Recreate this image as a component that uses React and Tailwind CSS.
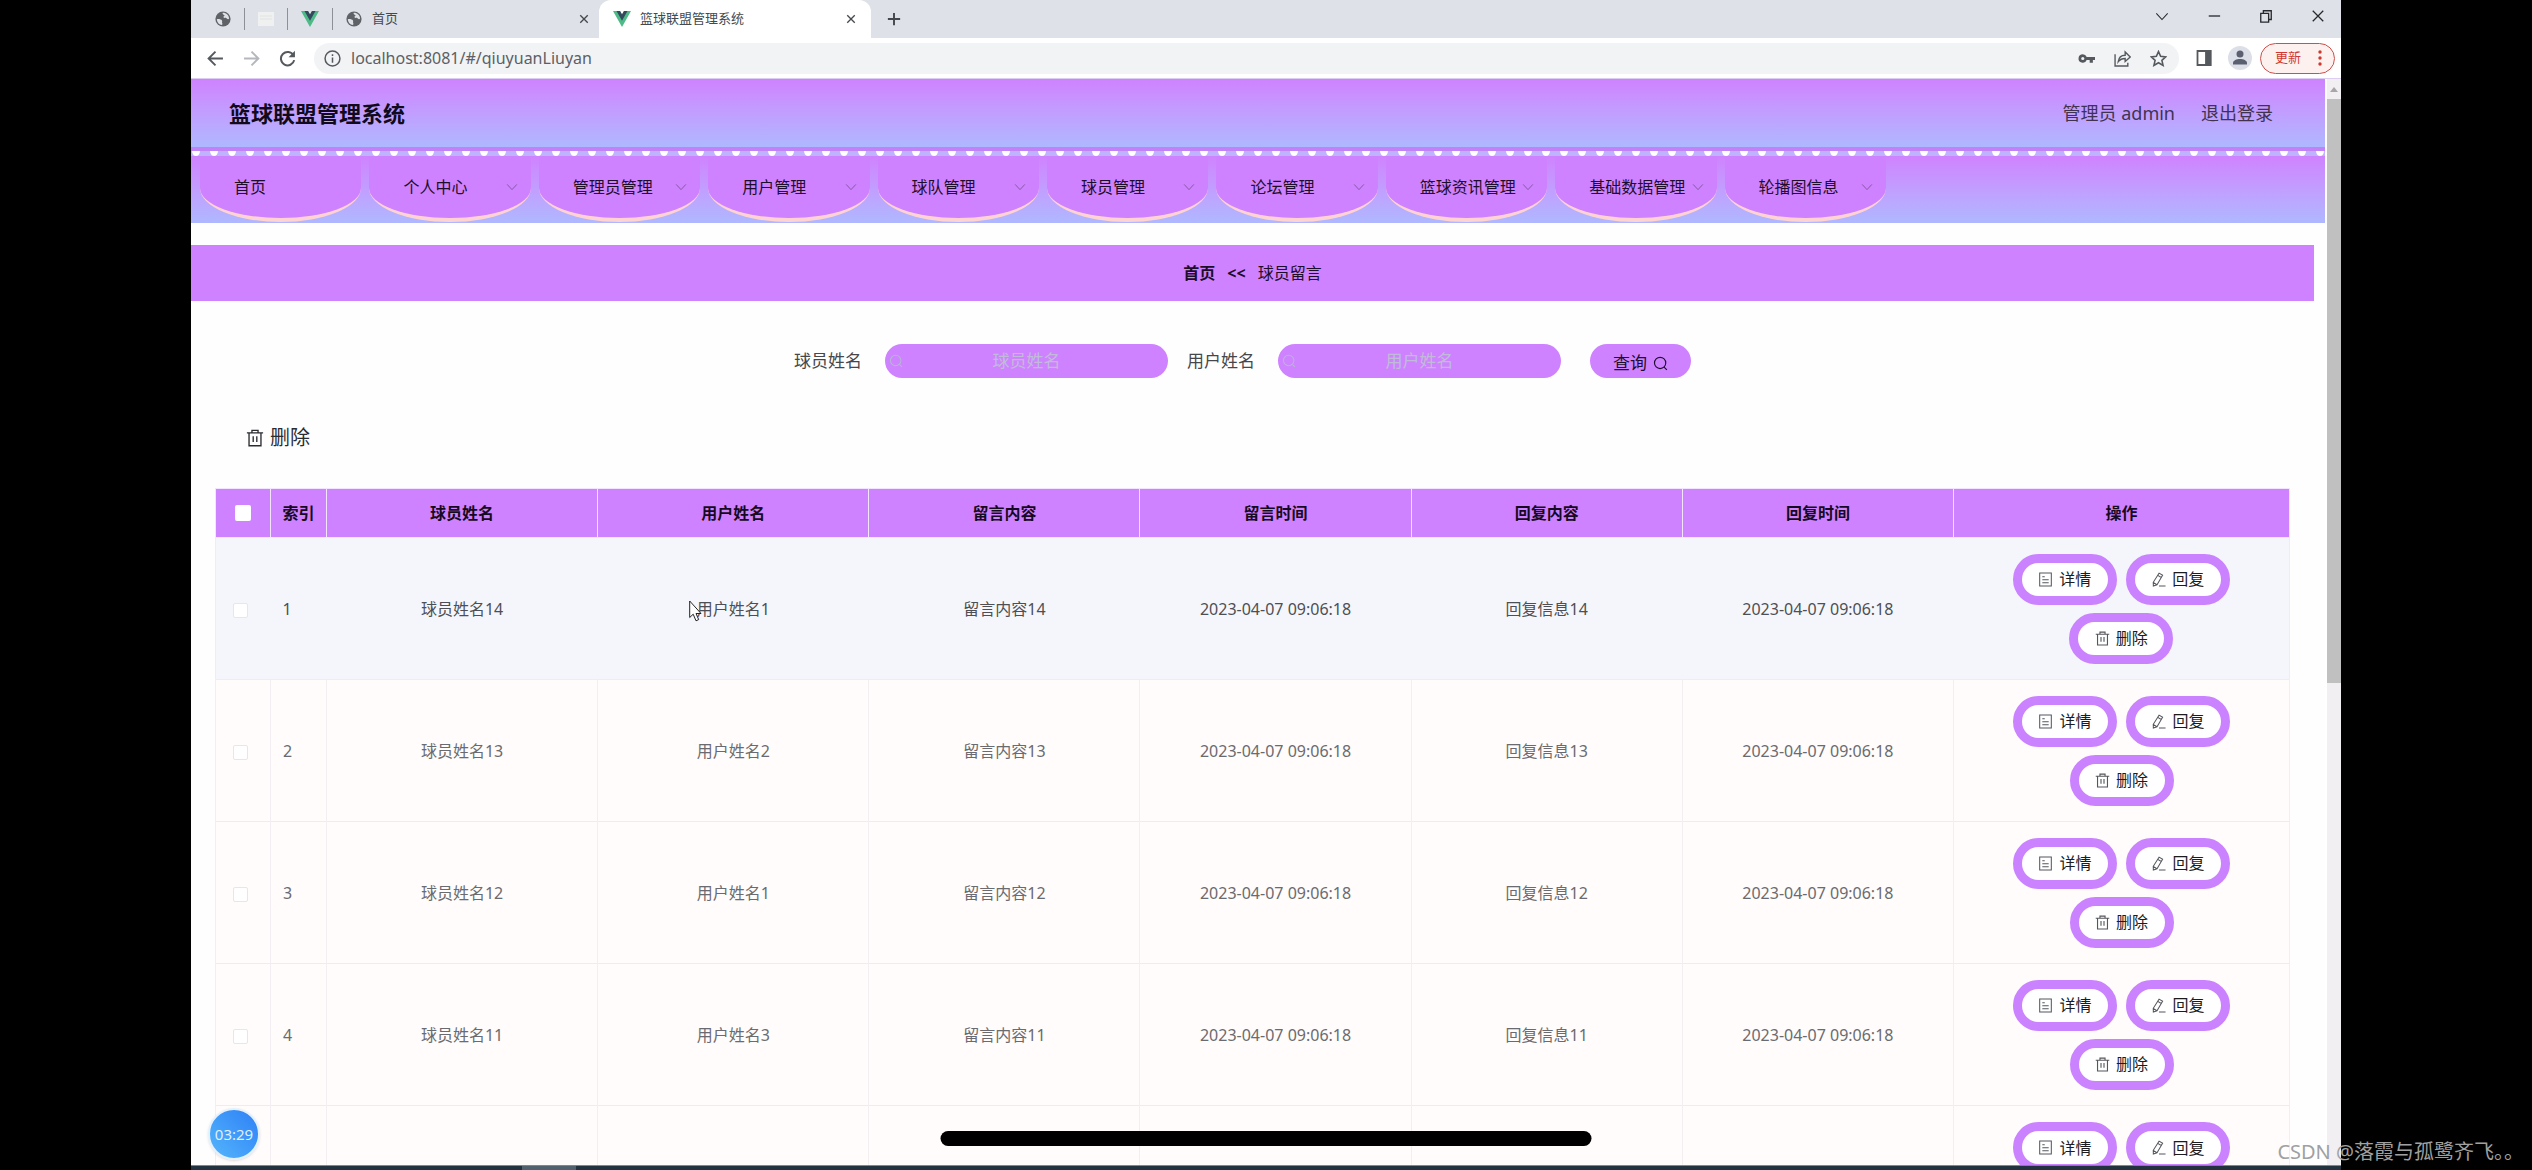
import React, { useState } from "react";

const menus = [
  { label: "首页", children: false },
  { label: "个人中心", children: true },
  { label: "管理员管理", children: true },
  { label: "用户管理", children: true },
  { label: "球队管理", children: true },
  { label: "球员管理", children: true },
  { label: "论坛管理", children: true },
  { label: "篮球资讯管理", children: true },
  { label: "基础数据管理", children: true },
  { label: "轮播图信息", children: true },
];

const columns = ["球员姓名", "用户姓名", "留言内容", "留言时间", "回复内容", "回复时间"];

const rows = [
  { id: 14, user: "用户姓名1" },
  { id: 13, user: "用户姓名2" },
  { id: 12, user: "用户姓名1" },
  { id: 11, user: "用户姓名3" },
];

const Icon = ({ children, className, width = 1.2 }) => (
  <svg
    viewBox="0 0 16 16"
    fill="none"
    stroke="currentColor"
    strokeWidth={width}
    className={className}
    aria-hidden="true"
  >
    {children}
  </svg>
);

const TrashIcon = ({ className }) => (
  <Icon className={className} width={1.2}>
    <path d="M.8 3.500h14.400M2.700 3.500v11.400h10.600V3.500M5.300 3.500V1.200h5.400v2.300M6.400 6.500v5M9.600 6.500v5" />
  </Icon>
);

const DocumentIcon = ({ className }) => (
  <Icon className={className} width={1.1}>
    <path d="M1.800 1h12.400v14H1.800zM4.600 5h2.600M4.600 8.300h6.800M4.600 11.400h6.800" />
  </Icon>
);

const EditIcon = ({ className }) => (
  <Icon className={className} width={1.1}>
    <path d="M8.600 1.200l3.800 2.200-6 10.200-3.900 1.300-.1-3.900zM7.200 3.600l3.800 2.200M2.400 11l3.900 2.600M8.500 15h7" />
  </Icon>
);

const SearchIcon = ({ className }) => (
  <Icon className={className} width={1.2}>
    <circle cx="7.600" cy="7.400" r="6" />
    <path d="M11.800 11.800l3 3" />
  </Icon>
);

const CloseIcon = ({ className, width = 2.2 }) => (
  <Icon className={className} width={width}>
    <path d="M2 2l12 12M14 2L2 14" />
  </Icon>
);

const GlobeIcon = () => (
  <svg viewBox="0 0 16 16" className="size-4 shrink-0" aria-hidden="true">
    <circle cx="8" cy="8" r="7.600" fill="#5f6368" />
    <path
      d="M1.800 8.200c2.200-.4 4.400.2 5.200 1.300.6.9-.4 1.500.2 2.400.4.7.3 1.500-.2 2.200C4 13.600 1.900 11.200 1.800 8.200zM7.800 1.800c3.400-.1 6.200 2.500 6.300 6-.9.9-1.700.3-2.300-.3-.6-.7-1.800-.2-2.700-.7-1-.6-.6-1.600.1-1.900.8-.4.1-1-.6-1.200-.9-.3-1.300-1.200-.8-1.900z"
      fill="#dee1e6"
    />
  </svg>
);

const VueIcon = () => (
  <svg viewBox="0 0 18 16" className="h-4 w-[18px] shrink-0" aria-hidden="true">
    <path d="M0 0h7l2 3.500L11 0h7L9 16z" fill="#4dba87" />
    <path d="M3.500 0H7l2 3.500L11 0h3.500L9 9.700z" fill="#35495e" />
  </svg>
);

const TabStrip = () => (
  <div className="flex h-[38px] items-center bg-[#dee1e8] text-[13px] text-[#45494d]">
    <div className="flex items-center gap-[13px] pl-6">
      <GlobeIcon />
      <span className="h-[22px] w-px bg-[#8d9197]" />
      <svg viewBox="0 0 16 16" className="size-4" aria-hidden="true">
        <path d="M0 1h16v14H0z" fill="#eef1f0" />
        <path d="M2 5h12M2 8h12" stroke="#dfe4e2" />
      </svg>
      <span className="h-[22px] w-px bg-[#8d9197]" />
      <VueIcon />
      <span className="h-[22px] w-px bg-[#8d9197]" />
    </div>
    <div className="flex w-[266px] items-center pr-[10px] pl-[13px]">
      <GlobeIcon />
      <span className="ml-[10px] flex-1">首页</span>
      <button aria-label="关闭">
        <CloseIcon className="size-[10px]" />
      </button>
    </div>
    <div className="flex h-full w-[272px] items-center rounded-t-xl bg-white pr-[15px] pl-[14px]">
      <VueIcon />
      <span className="ml-[9px] flex-1">篮球联盟管理系统</span>
      <button aria-label="关闭">
        <CloseIcon className="size-[10px]" />
      </button>
    </div>
    <button aria-label="新标签页" className="ml-4">
      <Icon className="size-[14px]" width={2.2}>
        <path d="M8 1v14M1 8h14" />
      </Icon>
    </button>
    <div className="ml-auto flex items-center gap-[38px] pr-4 pb-[6px] text-[#26282b]">
      <button aria-label="搜索标签页">
        <Icon className="size-[14px]">
          <path d="M1.500 5L8 12l6.500-7" />
        </Icon>
      </button>
      <button aria-label="最小化">
        <Icon className="size-[14px]" width={1.5}>
          <path d="M2 8h13" />
        </Icon>
      </button>
      <button aria-label="还原">
        <Icon className="size-[14px]" width={1.5}>
          <path d="M2 5h9v10H2zM5 5V2h9v10h-3" />
        </Icon>
      </button>
      <button aria-label="关闭窗口">
        <CloseIcon className="size-[14px]" width={1.5} />
      </button>
    </div>
  </div>
);

const AddressBar = () => {
  const [url, setUrl] = useState("localhost:8081/#/qiuyuanLiuyan");

  return (
    <div className="flex h-[41px] items-center border-b border-[#dccdf2] bg-white pr-[6px] pl-4 text-[#55595e]">
      <div className="flex items-center gap-[19px]">
        <button aria-label="后退">
          <Icon className="size-[17px]" width={1.8}>
            <path d="M15 8H1.500M8 1.500L1.500 8 8 14.500" />
          </Icon>
        </button>
        <button aria-label="前进" className="text-[#b4b7bb]">
          <Icon className="size-[17px]" width={1.8}>
            <path d="M1 8h13.500M8 1.500L14.500 8 8 14.500" />
          </Icon>
        </button>
        <button aria-label="刷新">
          <Icon className="size-[17px]" width={1.9}>
            <path d="M13.600 5A6.300 6.300 0 1 0 14.300 9.500" />
            <path d="M15 .8v6H9z" fill="currentColor" stroke="none" />
          </Icon>
        </button>
      </div>
      <div className="ml-[18px] flex h-[31px] flex-1 items-center rounded-full bg-[#f1f3f5] pr-3 pl-[10px]">
        <Icon className="size-[17px]" width={1.4}>
          <circle cx="8" cy="8" r="7" />
          <path d="M8 7v5M8 4v1.700" />
        </Icon>
        <input
          aria-label="地址"
          value={url}
          onChange={(e) => setUrl(e.target.value)}
          className="ml-[10px] flex-1 bg-transparent text-base text-[#5c6065] outline-none"
        />
        <div className="flex items-center gap-[19px]">
          <svg viewBox="0 0 16 16" className="size-[17px]" aria-hidden="true">
            <path
              d="M4.500 4a4 4 0 1 0 3.700 5.500H11V12h3V9.500h2v-3H8.200A4 4 0 0 0 4.500 4zm0 2.500a1.500 1.500 0 1 1 0 3 1.500 1.500 0 0 1 0-3z"
              fill="currentColor"
            />
          </svg>
          <Icon className="size-[17px]" width={1.3}>
            <path d="M1 4v11h12v-3M4 11c.5-4 3-6 6.500-6V1.800L15.300 6.500l-4.800 4.300V8C7.500 8 5.500 9 4 11z" />
          </Icon>
          <Icon className="size-[17px]" width={1.5}>
            <path d="M8 1.500l2 4.500 4.800.5-3.600 3.200 1.100 4.800L8 12l-4.300 2.500 1.100-4.800L1.200 6.500 6 6z" />
          </Icon>
        </div>
      </div>
      <Icon className="ml-[17px] size-4" width={1.8}>
        <path d="M1.500 1h13v14h-13z" />
        <path d="M10 1h4.500v14H10z" fill="currentColor" />
      </Icon>
      <svg viewBox="0 0 24 24" className="ml-4 size-6" aria-hidden="true">
        <circle cx="12" cy="12" r="12" fill="#dcdfe7" />
        <circle cx="12" cy="8" r="3.500" fill="#5b6070" />
        <path d="M5 18.500v-1.500c0-2.500 3.500-4 7-4s7 1.500 7 4v1.500z" fill="#5b6070" />
      </svg>
      <button className="ml-2 flex h-[31px] w-[75px] items-center justify-between rounded-full border border-[#cf4f4a] bg-[#fdf1ef] pr-3 pl-[14px] text-[13px] text-[#d0382f]">
        更新
        <svg viewBox="0 0 4 16" className="h-4 w-1" fill="currentColor" aria-hidden="true">
          <circle cx="2" cy="2" r="1.700" />
          <circle cx="2" cy="8" r="1.700" />
          <circle cx="2" cy="14" r="1.700" />
        </svg>
      </button>
    </div>
  );
};

const Header = () => (
  <header>
    <div className="flex h-[68px] items-center bg-linear-to-b from-[#cf82ff] to-[#aeb8ff] pr-[52px] pl-[38px] text-lg text-[#3f3350]">
      <h1 className="flex-1 text-[22px] font-bold text-[#100a1c]">篮球联盟管理系统</h1>
      <span>管理员 admin</span>
      <a href="#/login" className="ml-[26px]">
        退出登录
      </a>
    </div>
    <div className="border-t-4 border-[#c181f7] bg-[#bfb3ff]">
      <svg width="100%" height="5" className="block" aria-hidden="true">
        <defs>
          <pattern id="beads" width="18" height="5" patternUnits="userSpaceOnUse">
            <path d="M1 0h8c0 3-2 5-4 5S1 3 1 0z" fill="#fff" />
          </pattern>
        </defs>
        <rect width="100%" height="5" fill="url(#beads)" />
      </svg>
    </div>
    <nav className="h-[67px] bg-linear-to-b from-[#cf82ff] to-[#aeb8ff] pl-[5px]">
      <ul className="grid w-[1694px] max-w-full grid-cols-10">
        {menus.map((menu) => (
          <li key={menu.label} className="px-1">
            <a
              href="#/"
              className="flex h-[66px] items-center justify-between rounded-b-[50%_34px] border-b-4 border-[#ffd3d3] bg-[#cf82ff] pr-[13px] pl-[34px] whitespace-nowrap text-[#1d0d2b]"
            >
              {menu.label}
              {menu.children && (
                <Icon className="size-3 shrink-0 text-[#7d5599]">
                  <path d="M1.500 4.500l6.500 7 6.500-7" />
                </Icon>
              )}
            </a>
          </li>
        ))}
      </ul>
    </nav>
  </header>
);

const SearchField = ({ id, label }) => {
  const [value, setValue] = useState("");

  return (
    <div className="flex items-center gap-[23px] text-[17px]">
      <label htmlFor={id} className="text-[#45474b]">
        {label}
      </label>
      <div className="flex h-[34px] w-[283px] items-center rounded-full bg-[#cf82ff] px-1">
        <SearchIcon className="size-[14px] shrink-0 text-[#b9b3d6]" />
        <input
          id={id}
          value={value}
          onChange={(e) => setValue(e.target.value)}
          placeholder={label}
          className="min-w-0 flex-1 bg-transparent pr-[14px] text-center outline-none placeholder:text-[#c0bcd8]"
        />
      </div>
    </div>
  );
};

const ActionButton = ({ icon, children }) => (
  <button className="flex h-[51px] w-[104px] items-center justify-center gap-[6px] rounded-full border-[9px] border-[#cb82ff] bg-white text-[#1c1c1f]">
    {icon}
    {children}
  </button>
);

const RowActions = ({ removable = true }) => (
  <div className="flex flex-wrap justify-center gap-x-[9px] gap-y-2 px-12">
    <ActionButton icon={<DocumentIcon className="size-[15px] text-[#55575c]" />}>
      详情
    </ActionButton>
    <ActionButton icon={<EditIcon className="size-[15px] text-[#55575c]" />}>
      回复
    </ActionButton>
    {removable && (
      <ActionButton icon={<TrashIcon className="size-[15px] text-[#55575c]" />}>
        删除
      </ActionButton>
    )}
  </div>
);

const MessageTable = () => (
  <table className="w-full table-fixed border-collapse text-base">
    <colgroup>
      <col className="w-[55px]" />
      <col className="w-[56px]" />
      {columns.map((name) => (
        <col key={name} />
      ))}
      <col className="w-[336px]" />
    </colgroup>
    <thead>
      <tr className="h-[49px] bg-[#cf82ff] text-[#160a22]">
        <th className="border border-[#f3e4ff]">
          <input
            type="checkbox"
            aria-label="全选"
            className="mx-auto block size-4 appearance-none rounded-xs bg-white"
          />
        </th>
        <th className="border border-[#f3e4ff]">索引</th>
        {columns.map((name) => (
          <th key={name} className="border border-[#f3e4ff]">
            {name}
          </th>
        ))}
        <th className="border border-[#f3e4ff]">操作</th>
      </tr>
    </thead>
    <tbody>
      {rows.map((row, index) => (
        <tr
          key={row.id}
          className={
            index === 0
              ? "h-[142px] border border-[#ebeef5] bg-[#f5f6fc] text-center text-[#4d4f54]"
              : "h-[142px] border border-[#efebf0] bg-[#fffcfb] text-center text-[#6a6b70] [&>td]:border-x [&>td]:border-[#f3eef1]"
          }
        >
          <td>
            <input
              type="checkbox"
              aria-label={`选择第${index + 1}行`}
              className="mr-[5px] inline-block size-[15px] appearance-none rounded-xs border border-[#e6e7ec] bg-white align-middle"
            />
          </td>
          <td className="pl-3 text-left">{index + 1}</td>
          <td>球员姓名{row.id}</td>
          <td>{row.user}</td>
          <td>留言内容{row.id}</td>
          <td>2023-04-07 09:06:18</td>
          <td>回复信息{row.id}</td>
          <td>2023-04-07 09:06:18</td>
          <td>
            <RowActions />
          </td>
        </tr>
      ))}
      <tr className="h-[142px] border border-[#efebf0] bg-[#fffcfb] [&>td]:border-x [&>td]:border-[#f3eef1]">
        <td />
        <td />
        {columns.map((name) => (
          <td key={name} />
        ))}
        <td className="pt-4 align-top">
          <RowActions removable={false} />
        </td>
      </tr>
    </tbody>
  </table>
);

const Scrollbar = () => (
  <div className="flex w-[16px] flex-col border-l-2 border-white bg-[#f1eff2]">
    <svg viewBox="0 0 14 20" className="h-5 w-[14px]" aria-hidden="true">
      <path d="M3 13l4-5 4 5z" fill="#a9a6a9" />
    </svg>
    <div className="h-[584px] bg-[#c1c0c1]" />
  </div>
);

const App = () => {
  return (
    <div className="relative flex h-screen flex-col overflow-hidden bg-black px-[191px] font-['Noto_Sans','Noto_Sans_CJK_SC',sans-serif]">
      <TabStrip />
      <AddressBar />
      <div className="flex min-h-0 flex-1 bg-[#fffefe]">
        <div className="min-w-0 flex-1 overflow-hidden">
          <Header />
          <main className="pt-[22px] pr-[11px]">
            <div className="flex h-14 items-center justify-center gap-3 bg-[#cf82ff] text-[#1d0d2b]">
              <a href="#/" className="font-bold">
                首页
              </a>
              <span className="font-bold">&lt;&lt;</span>
              <span>球员留言</span>
            </div>
            <form
              className="flex items-center justify-center gap-[19px] pt-[43px] pr-5"
              onSubmit={(e) => e.preventDefault()}
            >
              <SearchField id="player" label="球员姓名" />
              <SearchField id="user" label="用户姓名" />
              <button className="ml-[10px] flex h-[34px] w-[101px] items-center justify-center gap-[6px] rounded-full bg-[#cf82ff] pt-1 text-[17px] text-[#1d0d2b]">
                查询
                <SearchIcon className="size-[15px]" />
              </button>
            </form>
            <div className="pt-10 pr-6 pl-6">
              <button className="ml-[31px] flex h-10 items-center gap-[6px] text-xl text-[#2b2c30]">
                <TrashIcon className="size-[18px]" />
                删除
              </button>
              <div className="pt-[30px]">
                <MessageTable />
              </div>
            </div>
          </main>
        </div>
        <Scrollbar />
      </div>
      <div className="h-[5px] shrink-0 border-t border-[#7b8791] bg-[#22333f] pl-[331px]">
        <div className="h-full w-[54px] bg-[#51626e]" />
      </div>

      <svg viewBox="0 0 13 22" className="absolute top-[600px] left-[689px] h-[22px] w-[13px]" aria-hidden="true">
        <path d="M.7 1v16.500l3.500-3.300L7 20.800l2.700-1.200L7 13.500h5z" fill="#fff" stroke="#222" />
      </svg>
      <div className="absolute bottom-[10px] left-[208px] flex size-[52px] items-center justify-center rounded-full border-2 border-[#e3f1fd] bg-linear-to-tr from-[#55b5fb] to-[#2f80f6] text-[15px] text-[#dff0ff] shadow">
        03:29
      </div>
      <div className="absolute bottom-6 left-1/2 h-[15px] w-[651px] -translate-x-1/2 rounded-full bg-black" />
      <div className="absolute right-2 bottom-1 text-xl whitespace-nowrap text-[#a0a0a0]">
        CSDN @落霞与孤鹭齐飞。。
      </div>
    </div>
  );
};

export default App;
